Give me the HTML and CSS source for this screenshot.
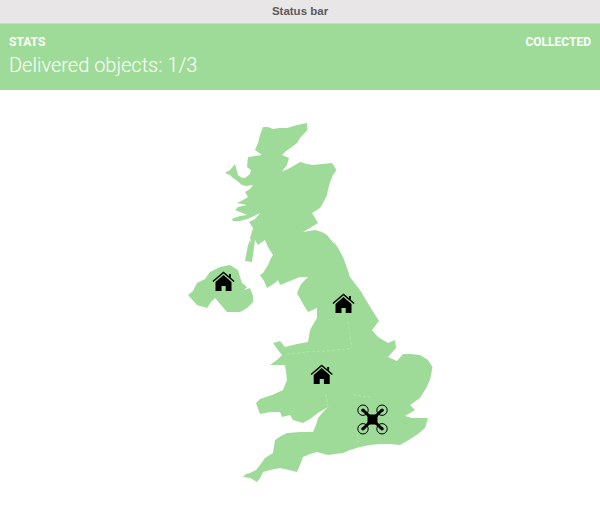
FILE: index.html
```html
<!DOCTYPE html>
<html lang="en">
<head>
<meta charset="utf-8">
<title>Status bar</title>
<link rel="stylesheet" href="styles.css">
</head>
<body>
<header class="titlebar">Status bar</header>
<section class="stats">
  <div class="stats-head"><span>STATS</span><span>COLLECTED</span></div>
  <div class="stats-value">Delivered objects: 1/3</div>
</section>
<svg class="map" viewBox="0 90 600 420" width="600" height="420" xmlns="http://www.w3.org/2000/svg">
  <defs>
    <g id="house">
      <path d="M-10.6 9 L0 0 L10.6 9" class="roof"/>
      <path d="M5.5 1.5 H7.4 V5.6 L5.5 4 Z"/>
      <path fill-rule="evenodd" d="M0 2.6 L8 9.4 V18.4 H2.2 V13.5 H-2 V18.4 H-8 V9.4 Z"/>
    </g>
    <g id="rotor">
      <circle r="5.2" class="ring"/>
      <path d="M-2.2 -1 L1 2.2 L4 4 L2 1 Z"/>
      <circle r="1.7"/>
    </g>
  </defs>
  <path class="land" d="M263 127 L268 127 L273 129 L280 128 L287 128 L297 125 L307 123 L307.500 130 L300 138 L297 143 L292 147 L286 151 L282 155 L289 158 L287 165 L282 171.500 L290 168 L300 162 L307 164 L313 165 L322 164 L332 163 L336.500 170 L333 175 L330 182 L328 190 L327 195 L323 203 L320 208 L312 213 L315 218 L318 223 L310 228 L303 232 L315 230 L322 232 L327 235 L335 245 L333 240 L338 248 L343 257 L347 268 L350 277 L356 285 L360 290 L366 300 L372 310 L379 321 L372 330 L378 337 L388 343 L395 340 L396 348 L388 357 L397 361 L403 354 L411 354 L420 355 L428 360 L432.500 367 L431 375 L430 380 L425 390 L420 398 L410 405 L415 410 L405 416 L412 418 L428 418 L425 428 L418 434 L412 438 L400 445 L390 444 L380 444 L370 445 L360 447 L350 450 L343 453 L335 454 L328 455 L317 452 L310 454 L303 457 L300 465 L297 472 L289 470 L280 468 L270 470 L263 472 L260 478 L257 482 L252 479 L250 478 L243 477 L246 474 L250 473 L256 470 L260 465 L265 458 L273 453 L274 446 L275 440 L281 436 L287 433 L300 432 L313 432 L316 425 L318 418 L323 412 L328 407 L318 413 L310 419 L303 423 L293 420 L290 415 L282 417 L280 412 L270 412 L260 414 L256 403 L260 399 L272 395 L283 390 L287 380 L286 372 L285 365 L270 365 L277 360 L282 355 L278 350 L273 343 L280 341 L285 347 L297 344 L308 342 L310 330 L314 323 L317 318 L317 308 L308 312 L303 304 L297 293 L301 284 L308 277 L300 277 L290 281 L280 285 L278 280 L275 283 L267 288 L264 281 L260 275 L263 273 L268 265 L271 258 L273 255 L268 247 L265 240 L258 245 L255 240 L252 262 L245 261 L248 245 L250 240 L252 243 L250 238 L253 228 L249 222 L255 219 L260 213 L252 217 L247 219 L240 221 L233 221 L232 219 L240 216 L247 215 L240 212 L235 210 L238 207 L247 205 L237 203 L243 200 L248 197 L245 192 L250 189 L253 185 L246 186 L242 185 L236 180 L233 178 L230 175 L225 173 L230 170 L235 164 L238 175 L242 178 L245 178 L250 174 L251 170 L247 167 L248 157 L255 156 L262 155 L255 150 L258 143 L260 135 Z"/>
  <path class="land" d="M188 295 L193 291 L197 283 L205 279 L210 272 L220 267 L230 265 L238 270 L240 277 L242 283 L247 287 L244 290 L250 288 L253 296 L253 302 L247 308 L240 312 L227 312 L221 305 L215 298 L211 302 L207 308 L197 305 Z"/>
  <g class="borders">
    <path d="M287 354 C300 354 310 350 322 352 C335 349 345 350 352 348"/>
    <path d="M326 394 L328 407"/>
    <path d="M353 395 L370 397"/>
    <path d="M357 430 L358 444"/>
    <path d="M348 322 L351 342 L352 348"/>
  </g>
  <use href="#house" x="223.500" y="272.500"/>
  <use href="#house" x="343.500" y="294.500"/>
  <use href="#house" x="321.700" y="365.500"/>
  <g transform="translate(372.500 419.500)">
    <path class="arms" d="M-9 -9 L9 9 M9 -9 L-9 9"/>
    <rect x="-5" y="-5" width="10" height="10"/>
    <use href="#rotor" x="-9.500" y="-9.300"/>
    <use href="#rotor" transform="translate(9.500 -9.300) scale(-1 1)"/>
    <use href="#rotor" transform="translate(-9.500 9.300) scale(1 -1)"/>
    <use href="#rotor" transform="translate(9.500 9.300) scale(-1 -1)"/>
  </g>
</svg>
</body>
</html>
```

FILE: styles.css
```css
html, body {
  margin: 0;
  padding: 0;
  background: #fff;
}

body {
  width: 600px;
  height: 510px;
  overflow: hidden;
}

.titlebar {
  height: 23px;
  line-height: 23px;
  box-sizing: content-box;
  border-bottom: 1px solid #d6d4d4;
  background: #e8e6e7;
  color: #5c5a5c;
  font: bold 11.500px/23px "Liberation Sans", Arial, sans-serif;
  text-align: center;
}

.stats {
  height: 66px;
  padding: 0 9px;
  background: #9edb98;
  color: #fff;
  font-family: Roboto, sans-serif;
}

.stats-head {
  display: flex;
  justify-content: space-between;
  padding-top: 11px;
  font-size: 12px;
  font-weight: 700;
  line-height: 14px;
}

.stats-value {
  margin-top: 4px;
  font-size: 20px;
  font-weight: 300;
  line-height: 24px;
}

.map {
  display: block;
}

.land {
  fill: #9edb98;
}

.borders {
  fill: none;
  stroke: #b9e6b4;
  stroke-width: 0.800;
  stroke-dasharray: 3 2;
}

.roof {
  fill: none;
  stroke: #000;
  stroke-width: 1.500;
}

.ring {
  fill: none;
  stroke: #000;
  stroke-width: 1;
}

.arms {
  fill: none;
  stroke: #000;
  stroke-width: 3;
}
```
